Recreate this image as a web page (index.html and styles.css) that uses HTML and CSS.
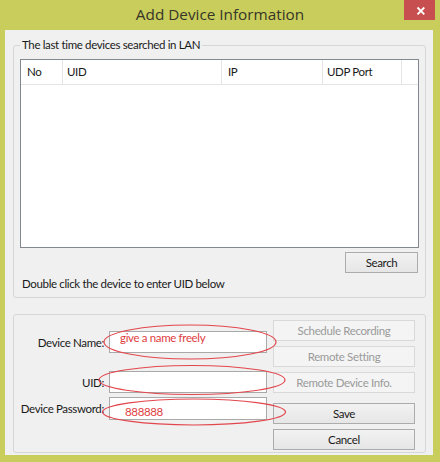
FILE: index.html
```html
<!DOCTYPE html>
<html>
<head>
<meta charset="utf-8">
<title>Add Device Information</title>
<link rel="stylesheet" href="styles.css">
</head>
<body>
<div class="window">
  <div class="titlebar">
    <span class="title">Add Device Information</span>
    <div class="close" aria-label="Close">
      <svg width="31" height="20" viewBox="0 0 31 20"><path d="M13.5 7.5 L20.3 14.3 M20.3 7.5 L13.5 14.3" stroke="#ffffff" stroke-width="1.8" fill="none"/></svg>
    </div>
  </div>
  <div class="client">
    <fieldset class="group search-group">
      <legend>The last time devices searched in LAN</legend>
      <div class="list">
        <div class="list-head">
          <div class="col c-no">No</div>
          <div class="col c-uid">UID</div>
          <div class="col c-ip">IP</div>
          <div class="col c-port">UDP Port</div>
          <div class="col c-rest"></div>
        </div>
      </div>
      <div class="search-row"><button class="btn btn-search">Search</button></div>
      <div class="hint">Double click the device to enter UID below</div>
    </fieldset>
    <div class="group device-group">
      <div class="form">
        <div class="row r-name">
          <label class="lbl">Device Name:</label>
          <div class="field"><span class="note note-name">give a name freely</span></div>
        </div>
        <div class="row r-uid">
          <label class="lbl">UID:</label>
          <div class="field"></div>
        </div>
        <div class="row r-pw">
          <label class="lbl">Device Password:</label>
          <div class="field"><span class="note note-pw">888888</span></div>
        </div>
      </div>
      <div class="actions">
        <button class="btn btn-off">Schedule Recording</button>
        <button class="btn btn-off">Remote Setting</button>
        <button class="btn btn-off">Remote Device Info.</button>
        <button class="btn btn-save">Save</button>
        <button class="btn btn-cancel">Cancel</button>
      </div>
    </div>
  </div>
  <svg class="marks" width="440" height="462" viewBox="0 0 440 462">
    <ellipse cx="190" cy="342" rx="86" ry="17"/>
    <ellipse cx="192" cy="380" rx="93" ry="14.5"/>
    <ellipse cx="194" cy="412" rx="91.5" ry="13"/>
  </svg>
</div>
</body>
</html>
```
FILE: styles.css
```css
* { box-sizing: border-box; }
html, body { margin: 0; padding: 0; }
body {
  width: 440px;
  height: 462px;
  background: #c9cd5b;
  font-family: Lato, "Open Sans", sans-serif;
  font-size: 11.5px;
  color: #1a1a1a;
  overflow: hidden;
}
.window {
  position: relative;
  width: 440px;
  height: 462px;
  display: flex;
  flex-direction: column;
}
.titlebar {
  position: relative;
  height: 30px;
  display: flex;
  justify-content: center;
  align-items: center;
}
.title {
  font-family: "Open Sans", sans-serif;
  font-size: 15.3px;
  color: #363628;
  line-height: 20px;
  margin-top: -2px;
}
.close {
  position: absolute;
  top: 0;
  left: 404px;
  width: 31px;
  height: 20px;
  background: #c84f4f;
}
.close svg { display: block; }
.client {
  margin: 0 7px 0 5px;
  height: 425px;
  background: #f0f0f0;
  display: flex;
  flex-direction: column;
  letter-spacing: -0.35px;
}
.group {
  margin: 0 7px 0 8px;
  width: 413px;
  border: 1px solid #d6d6d6;
  border-radius: 3px;
}
.search-group {
  margin-top: 8px;
  padding: 7px 6px 6px 6px;
  min-width: 0;
}
legend {
  padding: 0 2px;
  margin-left: 0;
  line-height: 14px;
  font-size: 11.5px;
}
.list {
  height: 189px;
  background: #ffffff;
  border: 1px solid #828790;
}
.list-head {
  display: flex;
  height: 25px;
  border-bottom: 1px solid #e5e5e5;
}
.col {
  height: 24px;
  line-height: 24px;
  padding-left: 5px;
  border-right: 1px solid #e5e5e5;
  white-space: nowrap;
}
.c-no { width: 42px; padding-left: 6px; }
.c-uid { width: 159px; padding-left: 4px; }
.c-ip { width: 101px; padding-left: 6px; }
.c-port { width: 79px; padding-left: 4px; }
.c-rest { flex: 1; border-right: none; }
.search-row {
  display: flex;
  justify-content: flex-end;
  margin-top: 4px;
  padding-right: 1px;
}
.btn {
  font-family: Lato, "Open Sans", sans-serif;
  font-size: 11.5px;
  letter-spacing: -0.35px;
  color: #1a1a1a;
  height: 21px;
  padding: 0;
  border: 1px solid #acacac;
  border-radius: 0;
  background: linear-gradient(#f2f2f2, #e6e6e6);
  line-height: 19px;
  text-align: center;
}
.btn-search { width: 73px; }
.hint {
  margin-top: 4px;
  margin-left: 2px;
  line-height: 14px;
}
.device-group {
  margin-top: 16px;
  padding: 5px 0 2px 0;
  display: flex;
}
.form {
  display: flex;
  flex-direction: column;
  padding-top: 11px;
}
.row {
  display: flex;
  align-items: center;
}
.r-uid { margin-top: 18px; }
.r-pw { margin-top: 4px; }
.lbl {
  width: 90px;
  text-align: right;
  white-space: nowrap;
}
.field {
  width: 158px;
  height: 22px;
  margin-left: 5px;
  background: #ffffff;
  border: 1px solid #a9a9a9;
}
.r-pw .field { height: 23px; }
.note {
  display: block;
  color: #e0403f;
  line-height: 12px;
}
.note-name { padding: 0 0 0 10px; }
.note-pw { padding: 8px 0 0 15px; }
.actions {
  display: flex;
  flex-direction: column;
  margin-left: 6px;
  width: 142px;
}
.actions .btn { width: 142px; }
.actions .btn + .btn { margin-top: 5px; }
.actions .btn.btn-save { margin-top: 10px; }
.btn-off {
  color: #9a9a9a;
  border-color: #d9d9d9;
  background: #f4f4f4;
}
.marks {
  position: absolute;
  left: 0;
  top: 0;
  pointer-events: none;
}
.marks ellipse {
  fill: none;
  stroke: #e2474d;
  stroke-width: 1.2;
}
```
